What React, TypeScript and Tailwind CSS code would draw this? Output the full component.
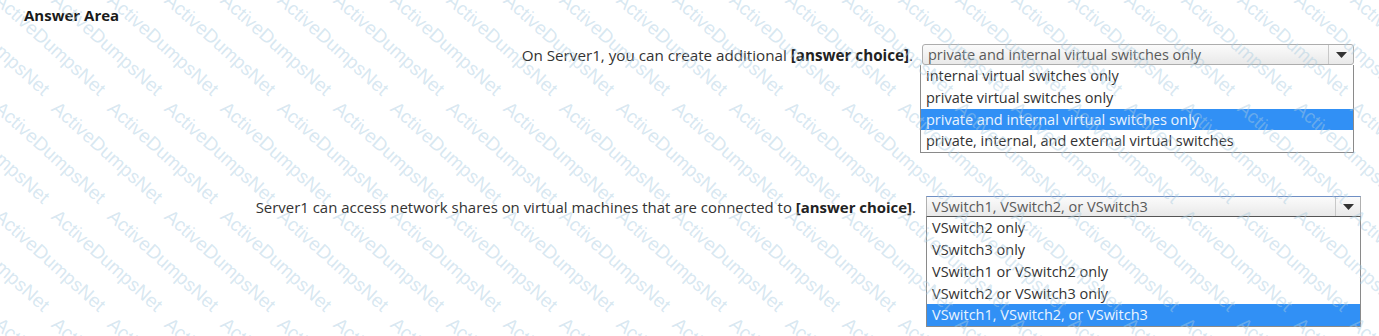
const q1Options = [
  "internal virtual switches only",
  "private virtual switches only",
  "private and internal virtual switches only",
  "private, internal, and external virtual switches",
];

const q2Options = [
  "VSwitch2 only",
  "VSwitch3 only",
  "VSwitch1 or VSwitch2 only",
  "VSwitch2 or VSwitch3 only",
  "VSwitch1, VSwitch2, or VSwitch3",
];

const Arrow = () => (
  <svg width="11" height="6" viewBox="0 0 11 6">
    <path d="M0 0 H11 L5.5 6 Z" fill="#333" />
  </svg>
);

type DropProps = {
  value: string;
  options: string[];
  selected: number;
  focused?: boolean;
};

const Dropdown = ({ value, options, selected, focused }: DropProps) => (
  <div className="flex flex-col">
    <div
      className={`flex h-[21px] items-stretch border bg-gradient-to-b from-[#fbfbfb] to-[#e9e9e9] ${
        focused
          ? "border-[#b0b0b0] border-t-[#6f8fc4] border-b-[#555]"
          : "ml-[2px] rounded-[3px] border-[#adadad]"
      }`}
    >
      <div className="flex-1 truncate pl-[5px] text-[14.5px] leading-[19px] text-[#5a5a5a]">
        {value}
      </div>
      <div className="flex w-[25px] items-center justify-center border-l border-[#c8c8c8]">
        <Arrow />
      </div>
    </div>
    <div className="border border-t-0 border-[#8a8a8a] bg-white">
      {options.map((o, i) => (
        <div
          key={o}
          className={`h-[21.8px] pl-[5px] text-[14.5px] leading-[21px] ${
            i === selected ? "bg-[#3190f5] text-[#eaf4ff]" : "text-[#333]"
          }`}
        >
          {o}
        </div>
      ))}
    </div>
  </div>
);

const Watermark = () => {
  const marks: { x: number; y: number }[] = [];
  for (let r = 0; r < 4; r++) {
    for (let c = -4; c < 25; c++) {
      marks.push({ x: 4 + c * 56.5, y: -10 + r * 108 });
    }
  }
  return (
    <div className="pointer-events-none absolute inset-0 overflow-hidden">
      {marks.map((m, i) => (
        <span
          key={i}
          className="absolute origin-top-left rotate-[42deg] whitespace-nowrap font-['Liberation_Sans',sans-serif] text-[19px] leading-none text-[#a9cbdf]/45"
          style={{ left: m.x, top: m.y }}
        >
          ActiveDumpsNet
        </span>
      ))}
    </div>
  );
};

export default function App() {
  return (
    <div className="relative h-[336px] w-[1379px] overflow-hidden bg-white font-['Open_Sans',sans-serif]">
      <div className="pl-[24px] pt-[5px] text-[15px] font-bold leading-[20px] text-[#1a1a1a]">
        Answer Area
      </div>

      <div className="mt-[19px] flex items-start">
        <div className="w-[913px] text-right text-[15.2px] leading-[23px] text-[#333]">
          On Server1, you can create additional{" "}
          <span className="font-bold text-[#222]">[answer choice]</span>.
        </div>
        <div className="ml-[7px] w-[434px]">
          <Dropdown
            value="private and internal virtual switches only"
            options={q1Options}
            selected={2}
          />
        </div>
      </div>

      <div className="mt-[43px] flex items-start">
        <div className="w-[916px] text-right text-[14.95px] leading-[23px] text-[#333]">
          Server1 can access network shares on virtual machines that are connected to{" "}
          <span className="font-bold text-[#222]">[answer choice]</span>.
        </div>
        <div className="ml-[10px] w-[435px]">
          <Dropdown
            value="VSwitch1, VSwitch2, or VSwitch3"
            options={q2Options}
            selected={4}
            focused
          />
        </div>
      </div>

      <Watermark />
    </div>
  );
}
